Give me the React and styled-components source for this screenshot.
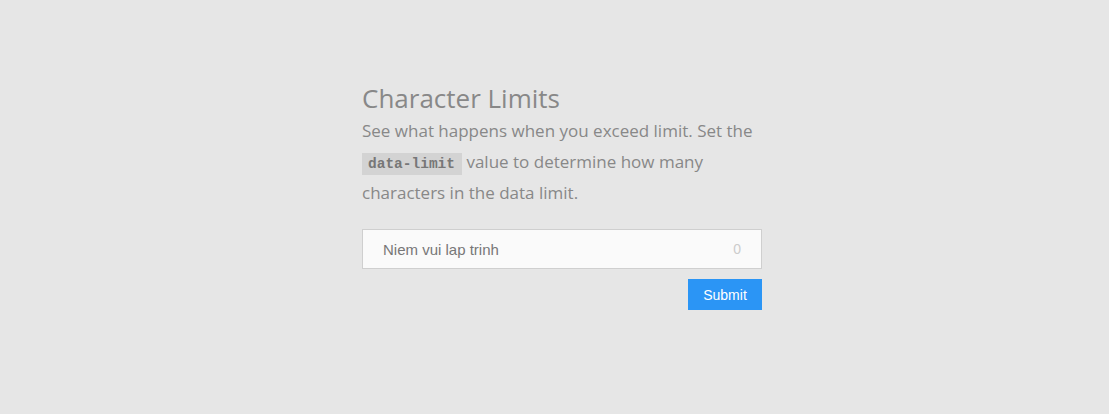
import React, { useState } from "react";
import styled, { createGlobalStyle } from "styled-components";

const Global = createGlobalStyle`
  html, body { margin: 0; padding: 0; background: #e6e6e6; }
  body { font-family: "Open Sans", sans-serif; }
`;

const Page = styled.div`
  min-height: 414px;
  display: flex;
  justify-content: center;
  padding: 81px 0 0 15px;
  box-sizing: border-box;
`;

const Card = styled.div`
  width: 400px;
  display: flex;
  flex-direction: column;
`;

const Title = styled.h2`
  margin: 0;
  font-family: "Open Sans", sans-serif;
  font-weight: 400;
  font-size: 26px;
  line-height: 34px;
  color: #888888;
`;

const Text = styled.p`
  margin: 0;
  font-family: "Open Sans", sans-serif;
  font-size: 17px;
  line-height: 31px;
  color: #888888;
`;

const Code = styled.code`
  font-family: "Liberation Mono", "Courier New", monospace;
  font-weight: 700;
  font-size: 14.5px;
  line-height: 17px;
  color: #777777;
  background: #d3d3d3;
  padding: 3px 7px 3px 6px;
`;

const Field = styled.div`
  margin-top: 21px;
  height: 40px;
  box-sizing: border-box;
  border: 1px solid #cfcfcf;
  background: #fafafa;
  display: flex;
  align-items: center;
  padding: 0 20px;
`;

const Input = styled.input`
  flex: 1;
  border: none;
  outline: none;
  background: transparent;
  font-family: "Liberation Sans", Arial, sans-serif;
  font-size: 15px;
  color: #777777;
  padding: 0;
`;

const Counter = styled.span`
  font-family: "Liberation Sans", Arial, sans-serif;
  font-size: 14px;
  color: #cccccc;
`;

const Actions = styled.div`
  display: flex;
  justify-content: flex-end;
  margin-top: 10px;
`;

const Button = styled.button`
  width: 74px;
  height: 31px;
  border: none;
  background: #2b95f5;
  color: #ffffff;
  font-family: "Liberation Sans", Arial, sans-serif;
  font-size: 14px;
  cursor: pointer;
`;

export default function App() {
  const [value, setValue] = useState("Niem vui lap trinh");
  return (
    <>
      <Global />
      <Page>
        <Card>
          <Title>Character Limits</Title>
          <Text>
            See what happens when you exceed limit. Set the <Code>data-limit</Code> value to
            determine how many characters in the data limit.
          </Text>
          <Field>
            <Input value={value} onChange={(e) => setValue(e.target.value)} />
            <Counter>0</Counter>
          </Field>
          <Actions>
            <Button>Submit</Button>
          </Actions>
        </Card>
      </Page>
    </>
  );
}
